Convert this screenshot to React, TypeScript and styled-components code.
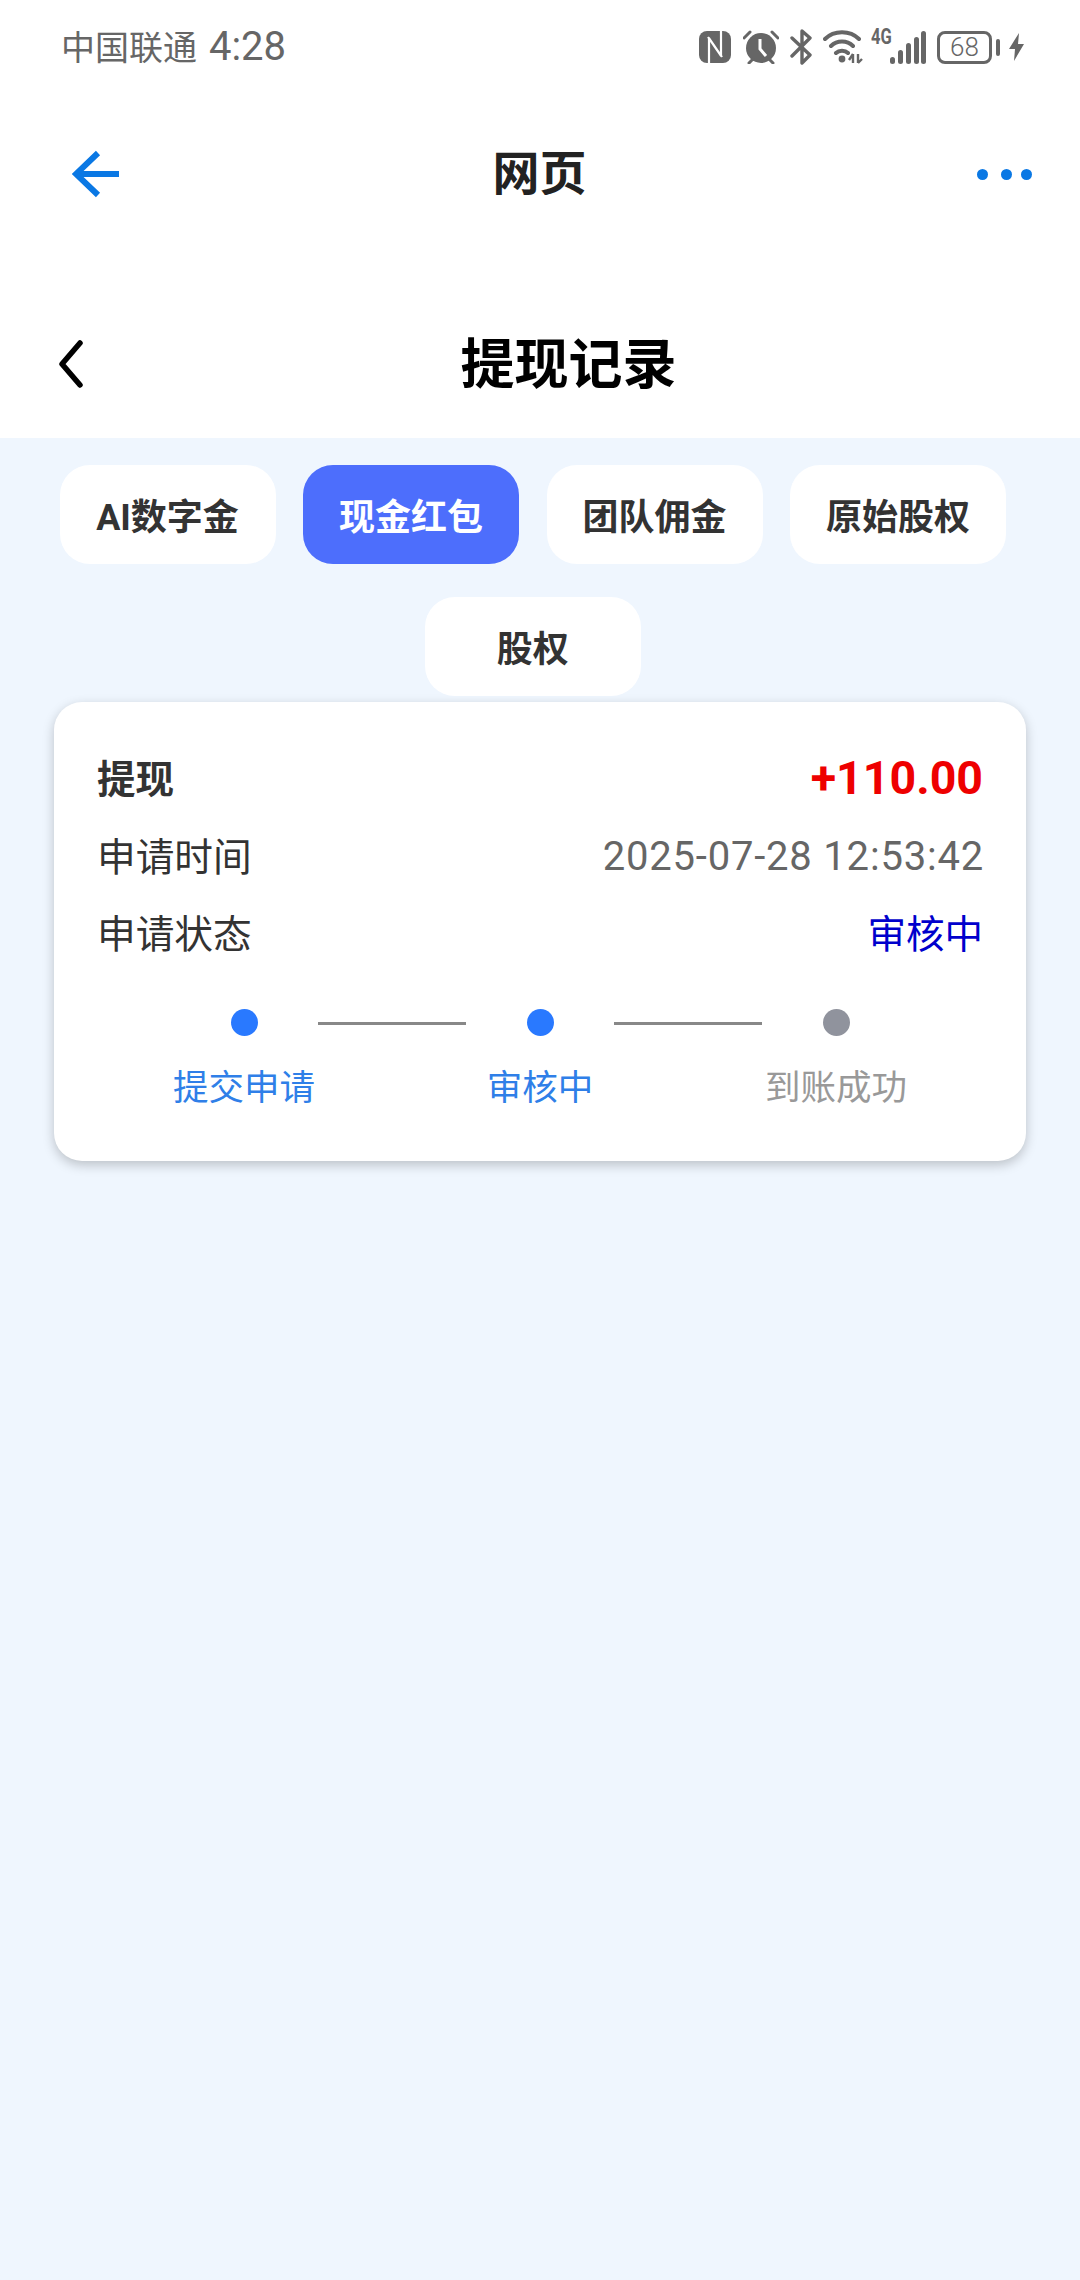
import React from "react";
import styled, { createGlobalStyle } from "styled-components";

const Global = createGlobalStyle`
  html, body { margin: 0; padding: 0; background: #eff6fe; }
  * { box-sizing: border-box; }
  body { font-family: Roboto, "Noto Sans CJK SC", sans-serif; }
`;

const Page = styled.div`
  width: 1080px;
  height: 2280px;
  background: #eff6fe;
  overflow: hidden;
`;

const Header = styled.header`
  background: #fff;
  height: 438px;
  display: flex;
  flex-direction: column;
`;

const StatusBar = styled.div`
  height: 94px;
  display: flex;
  align-items: center;
  justify-content: space-between;
  padding: 0 56px 0 61px;
  color: #666;
`;

const Carrier = styled.span`
  font-size: 34px;
  line-height: 40px;
`;

const Clock = styled.span`
  font-size: 40px;
  margin-left: 2px;
`;

const StatusIcons = styled.div`
  display: flex;
  align-items: center;
  height: 40px;
`;

const StatusIcon = styled.svg<{ $ml: number }>`
  display: block;
  margin-left: ${(p) => p.$ml}px;
  flex: none;
`;

const NetLabel = styled.span`
  font-size: 22px;
  font-weight: 700;
  line-height: 20px;
  width: 19px;
  margin-left: 8px;
  align-self: flex-start;
  margin-top: 0;
  white-space: nowrap;
  transform: scaleX(0.75);
  transform-origin: left;
`;

const Battery = styled.div`
  width: 55px;
  height: 33px;
  border: 3px solid #666;
  border-radius: 8px;
  margin-left: 11px;
  font-size: 26px;
  line-height: 27px;
  text-align: center;
  font-weight: 300;
`;

const BatteryNub = styled.div`
  width: 4px;
  height: 17px;
  border-radius: 2px;
  background: #666;
  margin-left: 4px;
`;

const NavBar = styled.div`
  height: 160px;
  display: flex;
  align-items: center;
  justify-content: space-between;
  padding: 0 48px 0 72px;
`;

const NavTitle = styled.h1`
  flex: 1;
  margin: 0;
  text-align: center;
  font-size: 47px;
  font-weight: 700;
  color: #222;
  line-height: 60px;
  padding-right: 18px;
`;

const Dots = styled.div`
  display: flex;
  align-items: center;
  gap: 13px;
`;

const Dot = styled.span`
  width: 11px;
  height: 11px;
  border-radius: 50%;
  background: #0a78e4;
  &:last-child { margin-left: -4px; }
`;

const PageBar = styled.div`
  flex: 1;
  display: flex;
  align-items: center;
  padding: 36px 0 0 58px;
`;

const PageTitle = styled.h2`
  flex: 1;
  margin: 0;
  text-align: center;
  font-size: 54px;
  font-weight: 700;
  color: #000;
  line-height: 70px;
  padding: 4px 27px 0 0;
`;

const Tabs = styled.div`
  display: flex;
  flex-wrap: wrap;
  justify-content: center;
  gap: 33px 27.5px;
  padding: 27px 74px 0 59.5px;
`;

const Tab = styled.div<{ $active?: boolean }>`
  width: 216px;
  height: 99px;
  padding-bottom: 2px;
  border-radius: 30px;
  background: ${(p) => (p.$active ? "#4d6efc" : "#fff")};
  color: ${(p) => (p.$active ? "#fff" : "#333")};
  font-size: 36px;
  font-weight: 700;
  display: flex;
  align-items: center;
  justify-content: center;
  white-space: nowrap;
`;

const Card = styled.section`
  width: 972px;
  height: 459px;
  margin: 6px 0 0 54px;
  background: #fff;
  border-radius: 28px;
  box-shadow: 0 4px 12px rgba(0, 0, 0, 0.22);
  padding: 38px 43px 0 43px;
`;

const Row = styled.div`
  height: 76.5px;
  display: flex;
  align-items: center;
  justify-content: space-between;
`;

const Label = styled.span<{ $bold?: boolean }>`
  font-size: ${(p) => (p.$bold ? 38.5 : 38.7)}px;
  font-weight: ${(p) => (p.$bold ? 700 : 400)};
  color: #333;
  padding-bottom: ${(p) => (p.$bold ? 4 : 1)}px;
`;

const Amount = styled.span`
  font-size: 46.5px;
  font-weight: 700;
  color: #ee0000;
`;

const Time = styled.span`
  font-size: 40px;
  letter-spacing: 0.8px;
  color: #666;
  padding-top: 4px;
  margin-right: -1px;
`;

const Status = styled.span`
  font-size: 38.5px;
  color: #0000cc;
`;

const Steps = styled.div`
  display: flex;
  align-items: flex-start;
  justify-content: center;
  margin-top: 39px;
`;

const Step = styled.div`
  width: 200px;
  display: flex;
  flex-direction: column;
  align-items: center;
  gap: 28px;
`;

const StepDot = styled.span<{ $on?: boolean }>`
  width: 27px;
  height: 27px;
  border-radius: 50%;
  background: ${(p) => (p.$on ? "#2979ff" : "#90939d")};
`;

const StepText = styled.span<{ $on?: boolean }>`
  font-size: 35.5px;
  line-height: 48px;
  white-space: nowrap;
  color: ${(p) => (p.$on ? "#2f7fe8" : "#999")};
`;

const StepLine = styled.span`
  width: 148px;
  height: 3px;
  background: #888;
  margin: 13px -26px 0;
  flex: none;
`;

const tabs = ["AI数字金", "现金红包", "团队佣金", "原始股权", "股权"];

const Nfc = () => (
  <StatusIcon $ml={0} width="32" height="32" viewBox="0 0 32 32">
    <rect x="0" y="0" width="32" height="32" rx="8" fill="#666" />
    <path d="M10 32V7l13 19M22 0v25L9 6" fill="none" stroke="#fff" strokeWidth="2.2" strokeLinejoin="round" />
  </StatusIcon>
);

const Alarm = () => (
  <StatusIcon $ml={12} width="36" height="34" viewBox="0 0 36 34">
    <circle cx="18" cy="18" r="15" fill="#666" />
    <path d="M17 9v10l6 7" fill="none" stroke="#fff" strokeWidth="3" />
    <path d="M1 8l6-6M35 8l-6-6M6 33l4-4M30 33l-4-4" stroke="#666" strokeWidth="3" strokeLinecap="round" />
  </StatusIcon>
);

const Bluetooth = () => (
  <StatusIcon $ml={11} width="23" height="36" viewBox="0 0 23 36">
    <path d="M2 9l18 17-8 8V2l8 7L2 27" fill="none" stroke="#666" strokeWidth="3.4" strokeLinecap="round" strokeLinejoin="round" />
  </StatusIcon>
);

const Wifi = () => (
  <StatusIcon $ml={10} width="40" height="34" viewBox="0 0 40 34">
    <path d="M2 9C11 0 27 0 36 9M8 16c6-6 16-6 22 0M13 23c3-3 9-3 12 0" fill="none" stroke="#666" strokeWidth="4" strokeLinecap="round" />
    <circle cx="19" cy="29" r="3.4" fill="#666" />
    <path d="M30 24v9M26 30l4-6M35 24v9M35 33l4-4" fill="none" stroke="#666" strokeWidth="2.4" />
  </StatusIcon>
);

const Signal = () => (
  <StatusIcon $ml={0} width="36" height="34" viewBox="0 0 36 34">
    {[
      [0, 27, 7],
      [8, 20, 14],
      [16, 13, 21],
      [24, 7, 27],
      [31, 1, 33],
    ].map(([x, y, h]) => (
      <rect key={x} x={x} y={y} width="5" height={h} rx="2.5" fill="#666" />
    ))}
  </StatusIcon>
);

const Bolt = () => (
  <StatusIcon $ml={9} width="15" height="28" viewBox="0 0 15 28">
    <path d="M10 0L0 16h6L5 28l10-17H9z" fill="#666" />
  </StatusIcon>
);

export default function App() {
  return (
    <Page>
      <Global />
      <Header>
        <StatusBar>
          <Carrier>
            中国联通<Clock> 4:28</Clock>
          </Carrier>
          <StatusIcons>
            <Nfc />
            <Alarm />
            <Bluetooth />
            <Wifi />
            <NetLabel>4G</NetLabel>
            <Signal />
            <Battery>68</Battery>
            <BatteryNub />
            <Bolt />
          </StatusIcons>
        </StatusBar>
        <NavBar>
          <svg width="48" height="48" viewBox="0 0 48 48" fill="none" stroke="#0a78e4" strokeWidth="6">
            <path d="M47 24H5M26 3L4 24l22 21" />
          </svg>
          <NavTitle>网页</NavTitle>
          <Dots>
            <Dot />
            <Dot />
            <Dot />
          </Dots>
        </NavBar>
        <PageBar>
          <svg width="26" height="48" viewBox="0 0 26 48" fill="none" stroke="#000" strokeWidth="5.5" strokeLinecap="round" strokeLinejoin="round">
            <path d="M22 3L4 24l18 21" />
          </svg>
          <PageTitle>提现记录</PageTitle>
        </PageBar>
      </Header>
      <Tabs>
        {tabs.map((t) => (
          <Tab key={t} $active={t === "现金红包"}>
            {t}
          </Tab>
        ))}
      </Tabs>
      <Card>
        <Row>
          <Label $bold>提现</Label>
          <Amount>+110.00</Amount>
        </Row>
        <Row>
          <Label>申请时间</Label>
          <Time>2025-07-28 12:53:42</Time>
        </Row>
        <Row>
          <Label>申请状态</Label>
          <Status>审核中</Status>
        </Row>
        <Steps>
          <Step>
            <StepDot $on />
            <StepText $on>提交申请</StepText>
          </Step>
          <StepLine />
          <Step>
            <StepDot $on />
            <StepText $on>审核中</StepText>
          </Step>
          <StepLine />
          <Step>
            <StepDot />
            <StepText>到账成功</StepText>
          </Step>
        </Steps>
      </Card>
    </Page>
  );
}
